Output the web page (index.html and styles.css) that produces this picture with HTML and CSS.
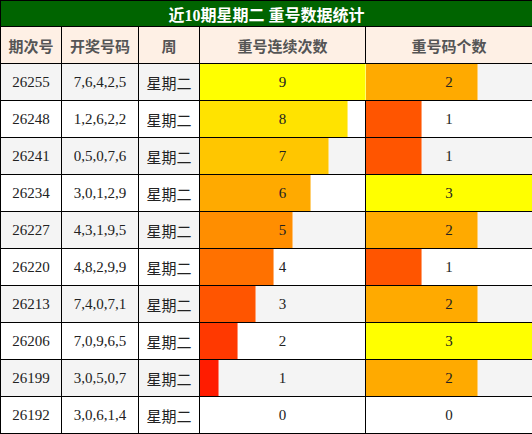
FILE: index.html
```html
<!DOCTYPE html>
<html lang="zh">

<head>
    <meta charset="UTF-8">
    <meta name="viewport" content="width=device-width, initial-scale=1.0">
    <title>重号数据统计</title>
    <link rel="stylesheet" href="styles.css">
</head>

<body>
    <table class="stats">
        <colgroup>
            <col class="col-issue">
            <col class="col-code">
            <col class="col-week">
            <col class="col-run">
            <col class="col-count">
        </colgroup>
        <tr>
            <th class="title" colspan="5">近10期星期二 重号数据统计</th>
        </tr>
        <tr class="head">
            <th>期次号</th>
            <th>开奖号码</th>
            <th>周</th>
            <th>重号连续次数</th>
            <th>重号码个数</th>
        </tr>
        <tr>
            <td>26255</td><td>7,6,4,2,5</td><td class="week">星期二</td>
            <td class="bar-cell"><div class="bar" style="width:100%;background:#ffff00"></div><span>9</span></td>
            <td class="bar-cell"><div class="bar" style="width:66.67%;background:#ffaa00"></div><span>2</span></td>
        </tr>
        <tr>
            <td>26248</td><td>1,2,6,2,2</td><td class="week">星期二</td>
            <td class="bar-cell"><div class="bar" style="width:88.89%;background:#ffe300"></div><span>8</span></td>
            <td class="bar-cell"><div class="bar" style="width:33.33%;background:#ff5500"></div><span>1</span></td>
        </tr>
        <tr>
            <td>26241</td><td>0,5,0,7,6</td><td class="week">星期二</td>
            <td class="bar-cell"><div class="bar" style="width:77.78%;background:#ffc600"></div><span>7</span></td>
            <td class="bar-cell"><div class="bar" style="width:33.33%;background:#ff5500"></div><span>1</span></td>
        </tr>
        <tr>
            <td>26234</td><td>3,0,1,2,9</td><td class="week">星期二</td>
            <td class="bar-cell"><div class="bar" style="width:66.67%;background:#ffaa00"></div><span>6</span></td>
            <td class="bar-cell"><div class="bar" style="width:100%;background:#ffff00"></div><span>3</span></td>
        </tr>
        <tr>
            <td>26227</td><td>4,3,1,9,5</td><td class="week">星期二</td>
            <td class="bar-cell"><div class="bar" style="width:55.56%;background:#ff8e00"></div><span>5</span></td>
            <td class="bar-cell"><div class="bar" style="width:66.67%;background:#ffaa00"></div><span>2</span></td>
        </tr>
        <tr>
            <td>26220</td><td>4,8,2,9,9</td><td class="week">星期二</td>
            <td class="bar-cell"><div class="bar" style="width:44.44%;background:#ff7100"></div><span>4</span></td>
            <td class="bar-cell"><div class="bar" style="width:33.33%;background:#ff5500"></div><span>1</span></td>
        </tr>
        <tr>
            <td>26213</td><td>7,4,0,7,1</td><td class="week">星期二</td>
            <td class="bar-cell"><div class="bar" style="width:33.33%;background:#ff5500"></div><span>3</span></td>
            <td class="bar-cell"><div class="bar" style="width:66.67%;background:#ffaa00"></div><span>2</span></td>
        </tr>
        <tr>
            <td>26206</td><td>7,0,9,6,5</td><td class="week">星期二</td>
            <td class="bar-cell"><div class="bar" style="width:22.22%;background:#ff3900"></div><span>2</span></td>
            <td class="bar-cell"><div class="bar" style="width:100%;background:#ffff00"></div><span>3</span></td>
        </tr>
        <tr>
            <td>26199</td><td>3,0,5,0,7</td><td class="week">星期二</td>
            <td class="bar-cell"><div class="bar" style="width:11.11%;background:#ff1c00"></div><span>1</span></td>
            <td class="bar-cell"><div class="bar" style="width:66.67%;background:#ffaa00"></div><span>2</span></td>
        </tr>
        <tr>
            <td>26192</td><td>3,0,6,1,4</td><td class="week">星期二</td>
            <td class="bar-cell"><span>0</span></td>
            <td class="bar-cell"><span>0</span></td>
        </tr>
    </table>
</body>

</html>
```

FILE: styles.css
```css
body {
    margin: 0;
    background: #ffffff;
    font-family: 'Liberation Serif', 'Noto Sans CJK SC', serif;
    color: #222222;
}

.stats {
    width: 532px;
    table-layout: fixed;
    border-collapse: collapse;
}

.col-issue { width: 61px; }
.col-code { width: 77px; }
.col-week { width: 61px; }
.col-run { width: 166px; }
.col-count { width: 167px; }

.stats th,
.stats td {
    border: 1px solid #000000;
    padding: 0;
    text-align: center;
    font-size: 15px;
}

.stats td {
    height: 36px;
}

.stats tr:nth-child(odd) td {
    background: #f4f4f4;
}

.stats tr:nth-child(even) td {
    background: #ffffff;
}

.title {
    height: 25px;
    background: #006400;
    color: #ffffff;
    font-size: 16px !important;
    font-weight: bold;
}

.head th {
    height: 36px;
    background: #fef0e5;
    color: #555555;
    font-weight: bold;
}

.week {
    font-family: 'Noto Sans CJK SC', sans-serif;
}

.bar-cell {
    position: relative;
}

.bar {
    position: absolute;
    left: 0;
    top: 0;
    bottom: 0;
    border-right: 1px solid rgba(255, 255, 255, 0.45);
}

.bar-cell span {
    position: relative;
}
```
